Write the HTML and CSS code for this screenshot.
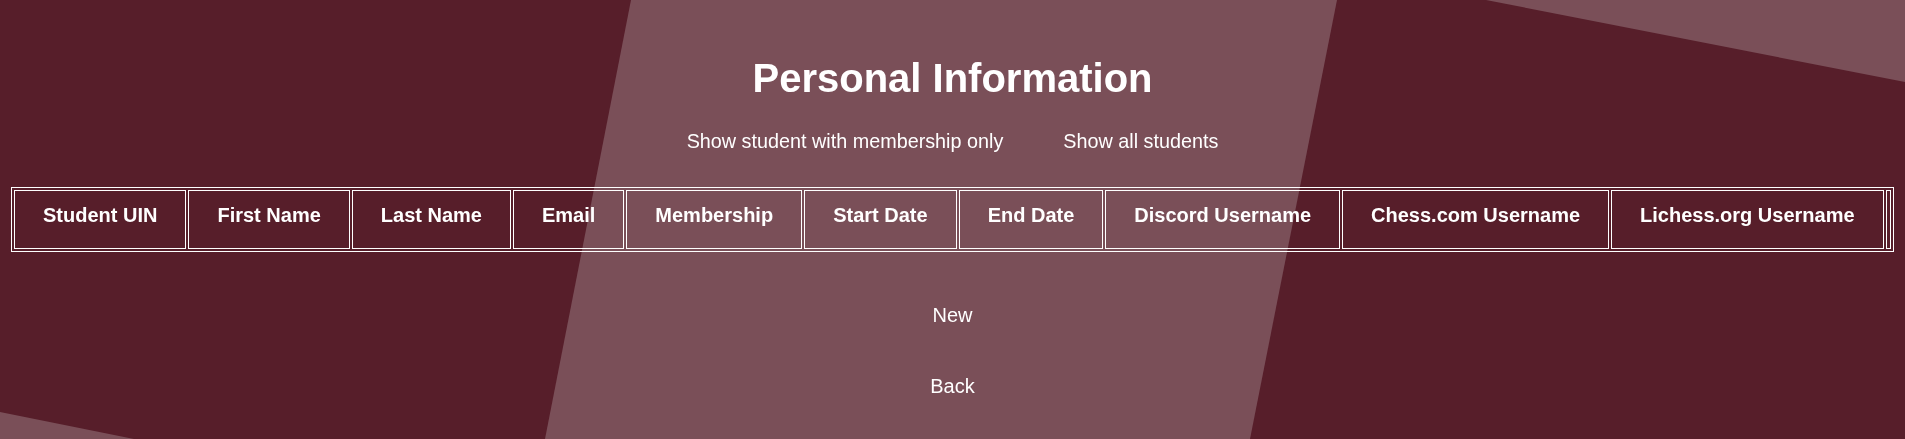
FILE: index.html
```html
<!DOCTYPE html>
<html lang="en">
<head>
<meta charset="utf-8">
<title>Personal Information</title>
<link rel="stylesheet" href="styles.css">
</head>
<body>
<svg class="backdrop" viewBox="0 0 1905 439" preserveAspectRatio="none" aria-hidden="true">
  <polygon points="631,0 1337,0 1250,439 545,439"/>
  <polygon points="1486,0 1905,0 1905,82"/>
  <polygon points="0,412 134,439 0,439"/>
</svg>
<main class="page">
  <h1 class="title">Personal Information</h1>
  <nav class="filters">
    <a href="#">Show student with membership only</a>
    <a href="#">Show all students</a>
  </nav>
  <table class="students">
    <thead>
      <tr>
        <th>Student UIN</th>
        <th>First Name</th>
        <th>Last Name</th>
        <th>Email</th>
        <th>Membership</th>
        <th>Start Date</th>
        <th>End Date</th>
        <th>Discord Username</th>
        <th>Chess.com Username</th>
        <th>Lichess.org Username</th>
        <th class="spacer"></th>
      </tr>
    </thead>
  </table>
  <div class="actions">
    <a href="#">New</a>
    <a href="#">Back</a>
  </div>
</main>
</body>
</html>
```

FILE: styles.css
```css
html, body {
  margin: 0;
  height: 100%;
}

body {
  background: #571e2a;
  color: #ffffff;
  font-family: "Liberation Sans", Arial, sans-serif;
  overflow: hidden;
}

.backdrop {
  position: fixed;
  top: 0;
  left: 0;
  width: 100%;
  height: 100%;
  z-index: 0;
}

.backdrop polygon {
  fill: #7a4f58;
}

.page {
  position: relative;
  z-index: 1;
  padding: 56px 0 0;
  display: flex;
  flex-direction: column;
  align-items: center;
}

.title {
  margin: 0;
  font-size: 40px;
  line-height: 45px;
  font-weight: bold;
}

.filters {
  margin-top: 29px;
  display: flex;
  gap: 60px;
  font-size: 19.8px;
  line-height: 23px;
}

.filters a,
.actions a {
  color: #ffffff;
  text-decoration: none;
}

.students {
  align-self: flex-start;
  margin: 34px 0 0 11px;
  border: 1px solid #ffffff;
  border-collapse: separate;
  border-spacing: 2px;
}

.students th {
  border: 1px solid #ffffff;
  padding: 13px 28px 21px;
  font-size: 20px;
  line-height: 23px;
  font-weight: bold;
  white-space: nowrap;
}

.students th.spacer {
  padding: 0;
  width: 3px;
}

.actions {
  margin-top: 52px;
  display: flex;
  flex-direction: column;
  align-items: center;
  gap: 48px;
  font-size: 20px;
  line-height: 23px;
}
```
